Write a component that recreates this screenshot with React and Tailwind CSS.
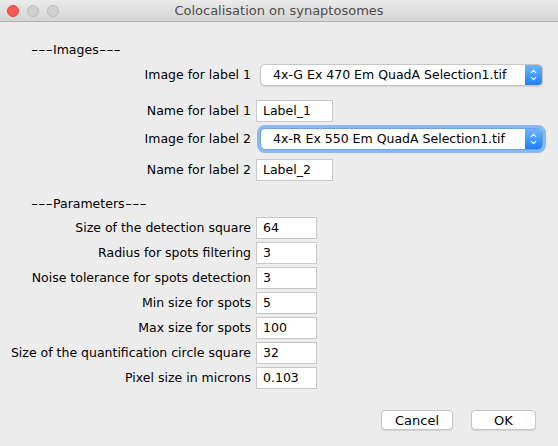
import { ChevronUp, ChevronDown } from 'lucide-react'

const params = [
  ['Size of the detection square', '64'],
  ['Radius for spots filtering', '3'],
  ['Noise tolerance for spots detection', '3'],
  ['Min size for spots', '5'],
  ['Max size for spots', '100'],
  ['Size of the quantification circle square', '32'],
  ['Pixel size in microns', '0.103'],
]

function Label({ children }) {
  return <div className="w-[251px] shrink-0 text-right pr-0 whitespace-nowrap">{children}</div>
}

function Field({ value, width = 'w-[77px]' }) {
  return (
    <div className={`${width} h-[22px] ml-[5px] bg-white border border-[#c8c8c8] pl-[6px] flex items-center`}>
      {value}
    </div>
  )
}

function Select({ value, focused }) {
  return (
    <div
      className={`ml-[9px] w-[283px] h-[22px] rounded-[5px] bg-white flex items-center ${
        focused
          ? 'ring-[3px] ring-[#8ab8f2] border border-[#6aa2e8]'
          : 'border border-[#c6c6c6] shadow-[0_1px_1px_rgba(0,0,0,0.12)]'
      }`}
    >
      <span className="flex-1 pl-[12px] whitespace-nowrap">{value}</span>
      <span className="w-[17px] h-full rounded-r-[4px] bg-gradient-to-b from-[#6cb3fa] to-[#1b7ff9] flex flex-col items-center justify-center text-white">
        <ChevronUp size={9} strokeWidth={3} className="-mb-[1px]" />
        <ChevronDown size={9} strokeWidth={3} className="-mt-[1px]" />
      </span>
    </div>
  )
}

function Dashes() {
  return <span className="inline-block w-[22px] scale-x-[1.6] origin-left whitespace-nowrap">---</span>
}

function Heading({ children, className = '' }) {
  return (
    <div className={`h-[16px] leading-[16px] pl-[31px] whitespace-nowrap ${className}`}>
      <Dashes />
      {children}
      <Dashes />
    </div>
  )
}

export default function App() {
  return (
    <div className="w-[558px] h-[446px] bg-[#ececec] text-[12.5px] text-black font-['DejaVu_Sans',sans-serif] overflow-hidden">
      <div className="relative h-[22px] bg-gradient-to-b from-[#ebebeb] to-[#d5d5d5] border-b border-[#b1b1b1] flex items-center justify-center">
        <div className="absolute left-[7px] top-[5px] flex gap-[8px]">
          <span className="w-[12px] h-[12px] rounded-full bg-[#fc5753] border border-[#df4744]" />
          <span className="w-[12px] h-[12px] rounded-full bg-[#d0d0d0] border border-[#bcbcbc]" />
          <span className="w-[12px] h-[12px] rounded-full bg-[#d0d0d0] border border-[#bcbcbc]" />
        </div>
        <span className="text-[13px] text-[#4c4c4c]">Colocalisation on synaptosomes</span>
      </div>

      <div className="pt-[20px]">
        <Heading>Images</Heading>

        <div className="mt-[6px] h-[22px] flex items-center">
          <Label>Image for label 1</Label>
          <Select value="4x-G Ex 470 Em QuadA Selection1.tif" />
        </div>
        <div className="mt-[14px] h-[22px] flex items-center">
          <Label>Name for label 1</Label>
          <Field value="Label_1" />
        </div>
        <div className="mt-[6px] h-[22px] flex items-center">
          <Label>Image for label 2</Label>
          <Select value="4x-R Ex 550 Em QuadA Selection1.tif" focused />
        </div>
        <div className="mt-[9px] h-[22px] flex items-center">
          <Label>Name for label 2</Label>
          <Field value="Label_2" />
        </div>

        <Heading className="mt-[15px]">Parameters</Heading>

        <div className="mt-[5px] flex flex-col gap-[3px]">
          {params.map(([label, value]) => (
            <div key={label} className="h-[22px] flex items-center">
              <Label>{label}</Label>
              <Field value={value} width="w-[61px]" />
            </div>
          ))}
        </div>

        <div className="mt-[21px] flex justify-end pr-[22px] gap-[18px]">
          <button className="w-[72px] h-[20px] bg-white rounded-[4px] border border-[#c4c4c4] shadow-[0_1px_1px_rgba(0,0,0,0.1)] text-[13px]">
            Cancel
          </button>
          <button className="w-[65px] h-[20px] bg-white rounded-[4px] border border-[#c4c4c4] shadow-[0_1px_1px_rgba(0,0,0,0.1)] text-[13px]">
            OK
          </button>
        </div>
      </div>
    </div>
  )
}
